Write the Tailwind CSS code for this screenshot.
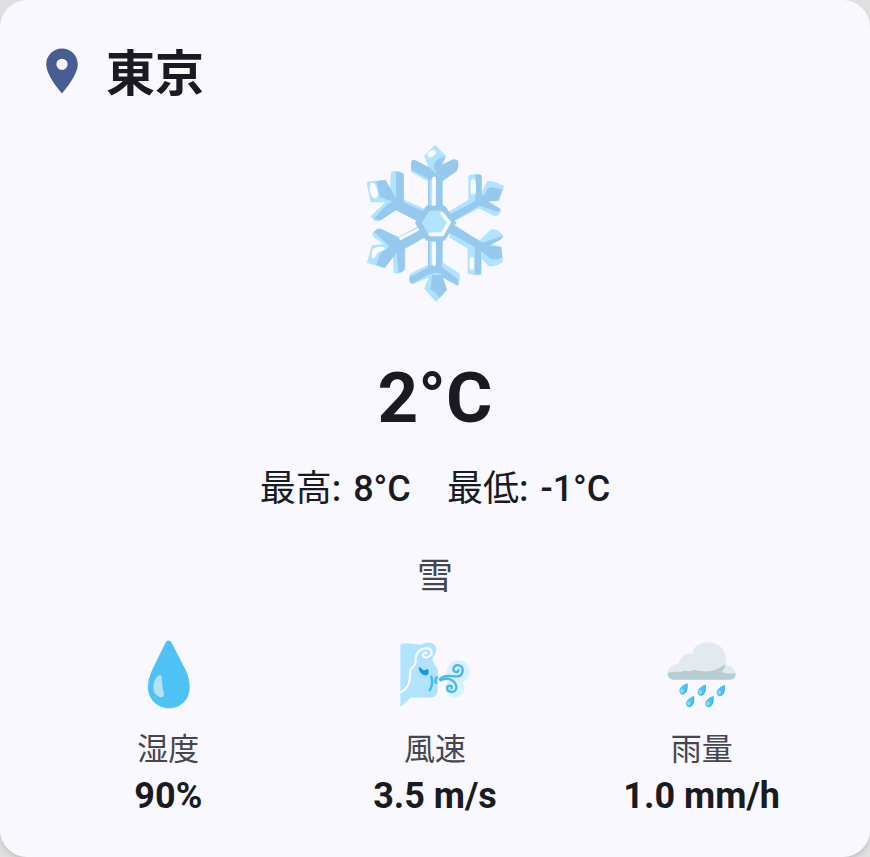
<!DOCTYPE html>
<html lang="ja">
<head>
<meta charset="utf-8">
<meta name="viewport" content="width=device-width, initial-scale=1">
<title>東京の天気</title>
<script src="https://cdn.jsdelivr.net/npm/@tailwindcss/browser@4"></script>
</head>
<body class="bg-[#e0e0e0] font-[Roboto,'Noto_Sans_CJK_JP',sans-serif] text-[#1a1b21]">
<main class="flex min-h-screen flex-col rounded-[27px] bg-[#f9f8ff] px-[35px] pt-[35px] pb-8 shadow-md">
  <header class="flex items-start gap-[17px]">
    <svg class="mt-[9px] size-[54px] shrink-0" viewBox="0 0 24 24" fill="#485d92" aria-hidden="true"><path d="M12 2C8.130 2 5 5.130 5 9c0 5.250 7 13 7 13s7-7.750 7-13c0-3.870-3.130-7-7-7zm0 9.500a2.500 2.500 0 0 1 0-5 2.500 2.500 0 0 1 0 5z"/></svg>
    <h1 class="text-[49px] leading-[80px] font-bold">東京</h1>
  </header>

  <section class="flex flex-col items-center">
    <svg class="mt-5 h-[175px] w-[160px]" viewBox="0 0 480 525" role="img" aria-label="雪の結晶">
      <g stroke-width="4" stroke-linejoin="round">
        <!-- left half -->
        <g transform="translate(15 15)">
          <g fill="#b0e3ff" stroke="#b0e3ff">
            <path d="M206 80h38v130h-38z"/>
            <path d="M155 67l50 22v33l-50-28z"/>
            <path d="M225 17l31 32-10 30-18 12-22-14-11-29z"/>
            <path d="M95 97q14-5 35 4v79l62 28-20 34-64-34-52 34q-14 2-21-13l46-44-47 0-12-55q2-5 12-4l41-5 17 32z"/>
            <path d="M39 280l17-13 60 25 62-32 18 28-62 34v66q-14 14-31 9l-3-60-28 45-49-15 14-49 40-5-36-24z"/>
            <path d="M206 300h38v105l15 44-31 34-33-38 14-35-52 20q-10-10-6-27l56-28z"/>
          </g>
          <g fill="#97c8ee">
            <path d="M204 90h5v120h-5zM204 295h5v90h-5zM228 85h20v125h-20zM228 298h20v100h-20z"/>
            <path d="M153 68q2-12 14-7l43 22 20 20v20l-22-5-54-29z"/>
            <path d="M108 95q24 2 23 12v80l62 28-17 30-69-35-44 31-21-6 41-42 15-8-38-14-11-46 27-6 32 55z"/>
            <path d="M42 275q11-14 22-8l52 27 64-37 15 35-61 35v58q-5 12-19 13l-5-61-35 46-26-8q6-30 20-42 27-13 13-20z"/>
            <path d="M149 411l55-28 24-18v32l-27 9-44 25q-12-1-8-20z"/>
            <path d="M216 405h30l15 44-22 25q-9-15-27-26z"/>
            <path d="M230 60l26-12-13 31 2 14-22-2-2-16z"/>
          </g>
          <path d="M122 295l54-28" fill="none" stroke="#fff" stroke-width="9" stroke-linecap="round"/>
          <path d="M38 327q24-12 37-3-2 9-18 11-8 5-12 17-4 8-10-2z" fill="#fff"/>
          <ellipse cx="41" cy="152" rx="11" ry="24" transform="rotate(-13 41 152)" fill="#fff"/>
        </g>
        <!-- right half -->
        <g transform="translate(225 15)">
          <g fill="#b0e3ff" stroke="#b0e3ff">
            <path d="M57 217l60-37v-72q14-6 36-1v62l19-42q8-8 48 12l-14 41-36 4 41 28q-5 18-21 13l-43-22-70 36z"/>
            <path d="M66 262l84 41 34-33q17-4 34 18-3 8-38 26l33 8 4 42q-20 16-40 13l-24-27v52q-15 4-38-3v-74l-55-34z"/>
            <path d="M38 370l47 30q6 9-1 34l-48-25z"/>
          </g>
          <g fill="#97c8ee">
            <path d="M20 82l14-6 34-18q15-3 17 9 2 14-4 26l-43 30-25 4z"/>
            <path d="M136 104q14-3 19 3v61l12-7q5-20 16-19l35 6-13 34-32 1 38 23q2 7-8 9l-55-18-76 45-14-18 78-41z"/>
            <path d="M58 252l20 6 70 45q8 6 20 2 27-10 51-18 2 6-8 12l-35 18 37 4 4 30q-19 14-37 4l-27-22v64q-1 10-18 6v-82l-77-42z"/>
            <path d="M30 382q8-3 14 6l40 30q2 8-1 19l-50-27z"/>
          </g>
        </g>
        <path d="M180 263l32-48q3-4 8-4h42q7 0 11 6l31 46-32 50q-4 5-10 5h-42q-6 0-10-6z" fill="#97c8ee"/>
        <path d="M200 263l24-36h37l25 36-24 40h-38z" fill="#b0e3ff"/>
      </g>
      <g fill="none" stroke="#fff" stroke-linecap="round" stroke-linejoin="round" stroke-width="11">
        <path d="M237 130v78M237 326v62M226 298h36l20-36-21-26"/>
        <path d="M355 140v31" stroke-width="15"/>
        <path d="M350 372v26" stroke-width="12"/>
      </g>
      <ellipse cx="230" cy="56" rx="13" ry="9" transform="rotate(-35 230 56)" fill="#fff"/>
    </svg>
    <p class="mt-[46px] text-[71px] leading-[84px] font-bold">2°C</p>
    <dl class="mt-[22px] flex gap-9 text-4xl leading-[54px]">
      <div class="flex gap-3"><dt>最高<span class="font-medium">:</span></dt><dd class="font-medium">8°C</dd></div>
      <div class="flex gap-3"><dt>最低<span class="font-medium">:</span></dt><dd class="font-medium">-1°C</dd></div>
    </dl>
    <p class="mt-[34px] text-4xl leading-[54px] text-[#45464f]">雪</p>
  </section>

  <dl class="mt-9 grid grid-cols-3 text-center">
    <div class="flex flex-col items-center">
      <svg class="size-[72px]" viewBox="0 0 216 216" aria-hidden="true"><path d="M102 5q9-8 17 3l42 82q12 25 12 52c0 38-28 63-62 63s-63-26-63-63q0-26 12-51z" fill="#4fc2f5"/><path d="M82 106c7-5 7 5 8 17q1 23 6 40-3 12-13 8-20-7-19-30 2-28 18-35z" fill="#b5e2fb"/></svg>
      <dt class="mt-[15px] text-[31px] leading-[46px] text-[#45464f]">湿度</dt>
      <dd class="text-4xl leading-[46px] font-bold">90%</dd>
    </div>
    <div class="flex flex-col items-center">
      <svg class="size-[72px]" viewBox="0 0 216 216" aria-hidden="true">
        <circle cx="178" cy="95" r="34" fill="#d7f0fd"/><circle cx="168" cy="145" r="28" fill="#d7f0fd"/>
        <path d="M4 15q4-7 39-4 17 0 20 5c27-18 54-4 48 18-3 15-14 20-9 29q4 12 11 20 9 11 2 15l4 14q4 7-3 10v32q-2 16-19 19l-61-1L8 199q-4 2-4-4z" fill="#b0e3ff"/>
        <path d="M5 157c31-15 28-47 28-62 1-12 15-15 17-27-3-26 10-42 32-43 18 0 19 17 11 23-11 9-22 3-21-4 1-6 8-7 11-4" fill="none" stroke="#fff" stroke-width="6" stroke-linecap="round"/>
        <path d="M59 86q1-7 7-2 8 12 18 3 5-2 5 8 0 11-10 11-16-3-20-20z" fill="#1797ec"/>
        <g fill="none" stroke="#45b8e8" stroke-width="7" stroke-linecap="round"><path d="M97 110q7 21-5 41M113 112q-7 8-2 16"/><path d="M123 118c13-17 33-7 51-9 20 0 23-29 6-33-16-3-23 16-10 20 5 2 9-2 8-6M125 121c19-10 37-3 43 8 11 19-2 29-14 26-13-3-12-17-2-18 7 0 8 6 5 8"/></g>
      </svg>
      <dt class="mt-[15px] text-[31px] leading-[46px] text-[#45464f]">風速</dt>
      <dd class="text-4xl leading-[46px] font-bold">3.5 m/s</dd>
    </div>
    <div class="flex flex-col items-center">
      <svg class="size-[72px]" viewBox="0 0 216 216" aria-hidden="true">
        <g transform="translate(-2 -2)">
        <path d="M24 120Q7 118 7 103q0-26 31-29 13-35 43-31C86-4 181-7 182 63l-1 15q28 0 30 28 0 15-18 15z" fill="#e2eaed"/>
        <path d="M7 101q20-6 38-3 15-7 28-2 14-7 27-2 46 9 80-20-1 15-12 24 24 8 43 3 0 20-18 20H24Q7 119 7 101z" fill="#b8cdd2"/>
        <g fill="#4fc2f5"><path id="drop" d="M66 131q-24 10-24 24 1 10 10 11 18-4 14-35z"/><use href="#drop" x="55" y="4"/><use href="#drop" x="112" y="5"/><use href="#drop" x="20" y="38"/><use href="#drop" x="78" y="38"/></g>
        <g fill="#8fdcfa"><ellipse id="glint" cx="50" cy="154" rx="5" ry="6"/><use href="#glint" x="55" y="4"/><use href="#glint" x="112" y="5"/><use href="#glint" x="20" y="38"/><use href="#glint" x="78" y="38"/></g>
        <g fill="none" stroke="#37aff0" stroke-width="3"><path id="edge" d="M65 134q2 24-12 30"/><use href="#edge" x="55" y="4"/><use href="#edge" x="112" y="5"/><use href="#edge" x="20" y="38"/><use href="#edge" x="78" y="38"/></g>
        </g>
      </svg>
      <dt class="mt-[15px] text-[31px] leading-[46px] text-[#45464f]">雨量</dt>
      <dd class="text-4xl leading-[46px] font-bold">1.0 mm/h</dd>
    </div>
  </dl>
</main>
</body>
</html>
